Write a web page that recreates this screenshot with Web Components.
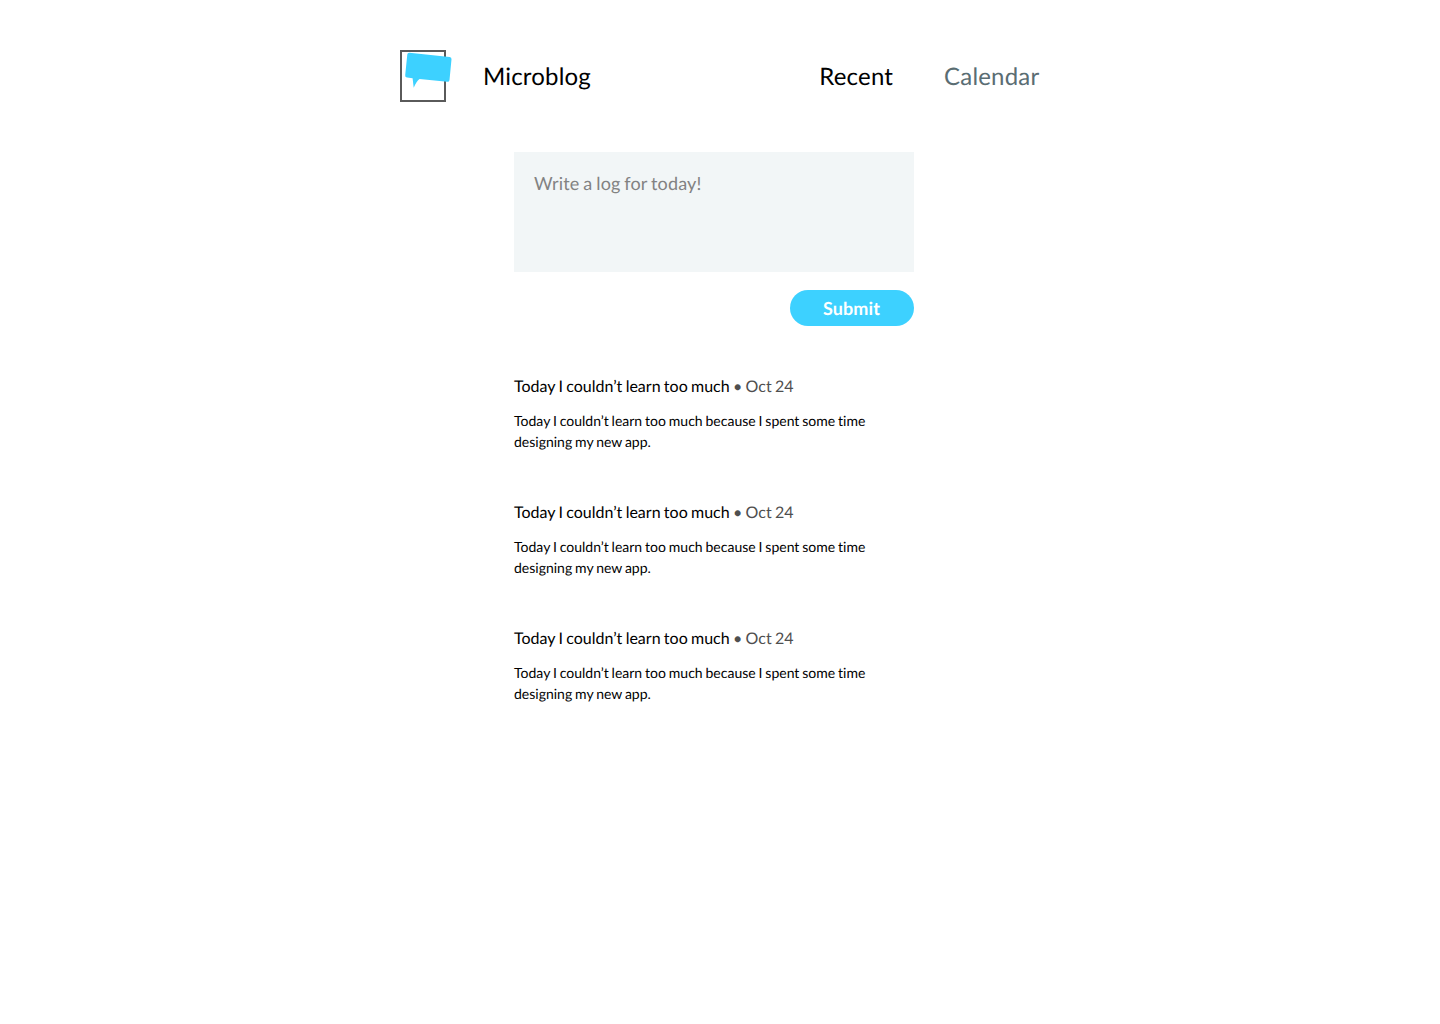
<!DOCTYPE html>
<html lang="en">
<head>
<meta charset="utf-8">
<title>Microblog</title>
<style>
body { margin: 0; background: #fff; font-family: Lato, sans-serif; color: #000; font-variant-ligatures: none; text-rendering: geometricPrecision; -webkit-font-smoothing: antialiased; }
</style>
</head>
<body>
<micro-app></micro-app>
<script>
class MicroLogo extends HTMLElement {
  constructor() {
    super();
    this.attachShadow({ mode: 'open' }).innerHTML = `
      <style>:host { display: block; width: 52px; height: 52px; } svg { display: block; }</style>
      <svg width="52" height="52" viewBox="0 0 52 52">
        <rect x="1" y="1" width="44" height="50" fill="#fff" stroke="#5a5a5a" stroke-width="2"/>
        <path fill="#3dd1ff" d="M9.4 2.7 L49.6 6.9 Q51.7 7.1 51.5 9.2 L49.5 30 Q49.2 32.1 47.1 31.8 L19.6 28.9 Q16.5 31 13.7 37.8 L12.6 28.2 L7.1 27.6 Q5 27.4 5.2 25.3 L7.3 4.6 Q7.5 2.5 9.4 2.7Z"/>
      </svg>`;
  }
}
customElements.define('micro-logo', MicroLogo);

class MicroHeader extends HTMLElement {
  constructor() {
    super();
    this.attachShadow({ mode: 'open' }).innerHTML = `
      <style>
        :host { display: flex; align-items: center; width: 640px; height: 52px; font-size: 24px; line-height: 30px; letter-spacing: 0.18px; }
        .brand { margin-left: 31px; }
        .brand, nav { padding-top: 2px; }
        nav { display: flex; gap: 51px; margin-left: auto; margin-right: 0.7px; }
        .muted { color: #5a6d73; }
      </style>
      <micro-logo></micro-logo><span class="brand">Microblog</span>
      <nav><span>Recent</span><span class="muted">Calendar</span></nav>`;
  }
}
customElements.define('micro-header', MicroHeader);

class MicroComposer extends HTMLElement {
  constructor() {
    super();
    this.attachShadow({ mode: 'open' }).innerHTML = `
      <style>
        :host { display: flex; flex-direction: column; align-items: flex-end; gap: 18px; font-size: 18px; }
        .field { box-sizing: border-box; width: 400px; height: 120px; padding: 20px; background: #f2f6f7; color: #828282; line-height: 22px; letter-spacing: 0.14px; word-spacing: -0.85px; }
        .submit { width: 124px; height: 36px; border: 0; padding: 0 1px 0 0; border-radius: 18px; background: #3dd1ff; color: #fff; font: bold 18px/36px Lato, sans-serif; letter-spacing: 0.1px; text-rendering: inherit; }
      </style>
      <div class="field">Write a log for today!</div>
      <button class="submit">Submit</button>`;
  }
}
customElements.define('micro-composer', MicroComposer);

class MicroPost extends HTMLElement {
  constructor() {
    super();
    this.attachShadow({ mode: 'open' }).innerHTML = `
      <style>
        :host { display: block; }
        h2 { margin: 0 0 14px; font-size: 16px; font-weight: 400; line-height: 19px; word-spacing: -0.78px; }
        h2 span { color: #4f4f4f; }
        p { margin: 0; font-size: 14px; line-height: 21px; word-spacing: -0.7px; }
      </style>
      <h2><slot name="title"></slot><span> • <slot name="date"></slot></span></h2>
      <p><slot></slot></p>`;
  }
}
customElements.define('micro-post', MicroPost);

class MicroApp extends HTMLElement {
  constructor() {
    super();
    const post = `<micro-post><span slot="title">Today I couldn’t learn too much</span><span slot="date">Oct 24</span>Today I couldn’t learn too much because I spent some time designing my new app.</micro-post>`;
    this.attachShadow({ mode: 'open' }).innerHTML = `
      <style>
        :host { display: block; width: 640px; height: 974px; margin: 0 auto; padding-top: 50px; }
        main { width: 400px; margin: 50px 0 0 114px; }
        .posts { display: flex; flex-direction: column; gap: 51px; margin-top: 51px; }
      </style>
      <micro-header></micro-header>
      <main>
        <micro-composer></micro-composer>
        <div class="posts">${post.repeat(3)}</div>
      </main>`;
  }
}
customElements.define('micro-app', MicroApp);
</script>
</body>
</html>
